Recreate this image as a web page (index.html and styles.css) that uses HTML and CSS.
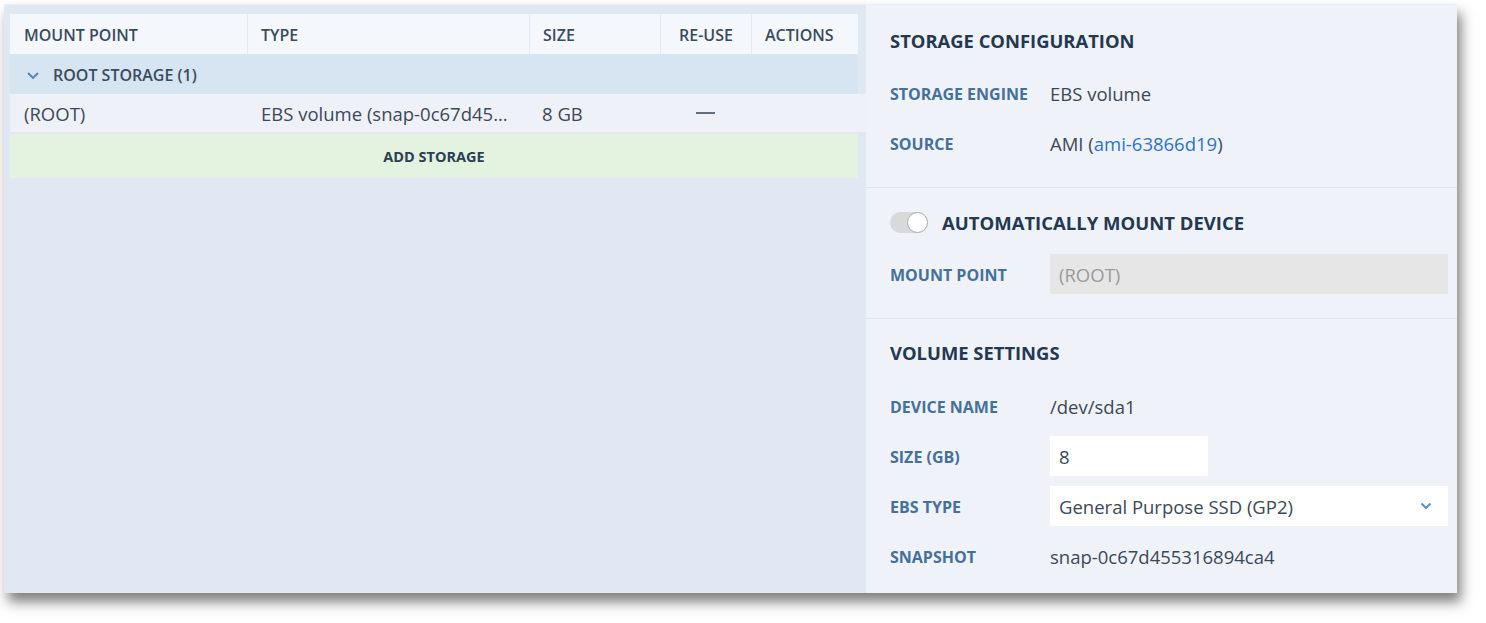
FILE: index.html
```html
<!DOCTYPE html>
<html>
<head>
<meta charset="utf-8">
<link rel="stylesheet" href="styles.css">
</head>
<body>
<div class="window">
  <div class="left">
    <div class="thead">
      <div class="th c1">MOUNT POINT</div>
      <div class="th c2">TYPE</div>
      <div class="th c3">SIZE</div>
      <div class="th c4">RE-USE</div>
      <div class="th c5">ACTIONS</div>
    </div>
    <div class="group">
      <svg class="chev" width="14" height="9" viewBox="0 0 14 9"><path d="M2 2 L7 7 L12 2" fill="none" stroke="#4f83b8" stroke-width="1.8"/></svg>
      <span>ROOT STORAGE (1)</span>
    </div>
    <div class="row">
      <div class="td c1">(ROOT)</div>
      <div class="td c2">EBS volume (snap-0c67d45...</div>
      <div class="td c3">8 GB</div>
      <div class="td c4 center"><span class="dash"></span></div>
      <div class="td c5"></div>
    </div>
    <div class="add">ADD STORAGE</div>
  </div>
  <div class="right">
    <section class="sec sec1">
      <h2 class="heading">STORAGE CONFIGURATION</h2>
      <div class="fields">
        <div class="label">STORAGE ENGINE</div><div class="value">EBS volume</div>
        <div class="label">SOURCE</div><div class="value">AMI (<a class="link">ami-63866d19</a>)</div>
      </div>
    </section>
    <section class="sec sec2">
      <div class="toggle-row">
        <span class="toggle"><span class="knob"></span></span>
        <span class="toggle-label">AUTOMATICALLY MOUNT DEVICE</span>
      </div>
      <div class="fields">
        <div class="label">MOUNT POINT</div><div class="input disabled">(ROOT)</div>
      </div>
    </section>
    <section class="sec sec3">
      <h2 class="heading">VOLUME SETTINGS</h2>
      <div class="fields">
        <div class="label">DEVICE NAME</div><div class="value">/dev/sda1</div>
        <div class="label">SIZE (GB)</div><div><div class="input small">8</div></div>
        <div class="label">EBS TYPE</div>
        <div class="input select">General Purpose SSD (GP2)
          <svg class="sel-chev" width="12" height="8" viewBox="0 0 12 8"><path d="M1.5 1.5 L6 6 L10.5 1.5" fill="none" stroke="#5f8fc4" stroke-width="2"/></svg>
        </div>
        <div class="label">SNAPSHOT</div><div class="value">snap-0c67d455316894ca4</div>
      </div>
    </section>
  </div>
</div>
</body>
</html>
```

FILE: styles.css
```css
* { box-sizing: border-box; }
html, body { margin: 0; background: #ffffff; }
body {
  padding: 4px 0 0 4px;
  min-height: 623px;
  font-family: "Open Sans", "Noto Sans", sans-serif;
  color: #3b4859;
}
.window {
  display: flex;
  width: 1453px;
  height: 589px;
  border-top: 1px solid #e9eff6;
  box-shadow: 4px 9px 12px rgba(0,0,0,0.5);
}
.left {
  width: 862px;
  background: #e0e9f3;
  padding: 9px 0 0 6px;
}
.thead {
  display: flex;
  height: 40px;
  background: #f4f7fb;
  margin-right: 8px;
}
.th {
  display: flex;
  align-items: center;
  padding-left: 13px;
  padding-top: 2px;
  font-size: 16px;
  font-weight: 600;
  color: #3a4b60;
  border-left: 1px solid #e2eaf4;
}
.th.c1 { border-left: none; padding-left: 14px; }
.c1 { width: 237px; }
.c2 { width: 282px; }
.c3 { width: 131px; }
.c4 { width: 91px; }
.c5 { width: 107px; }
.th.c4 { padding-left: 18px; }
.group {
  display: flex;
  align-items: center;
  height: 40px;
  background: #d7e4f1;
  margin-right: 8px;
  padding-left: 16px;
  padding-top: 1px;
  font-size: 16px;
  font-weight: 600;
  color: #3a4b60;
}
.chev { margin-right: 13px; margin-top: 1px; }
.row {
  display: flex;
  height: 38px;
  background: #eef2f8;
}
.td {
  display: flex;
  align-items: center;
  padding-left: 14px;
  font-size: 18.5px;
  color: #3b4859;
  white-space: nowrap;
}
.td.c3 { padding-left: 13px; }
.td.center { justify-content: center; padding-left: 0; }
.dash { display: block; width: 19px; height: 2px; background: #5f6f84; }
.add {
  margin-top: 2px;
  margin-right: 8px;
  height: 44px;
  background: #e4f3df;
  display: flex;
  align-items: center;
  justify-content: center;
  font-size: 14.5px;
  font-weight: 700;
  color: #2c3e55;
}
.right {
  flex: 1;
  background: #eff3f9;
  padding: 0 9px 0 24px;
}
.sec { border-bottom: 1px solid #dbe6f2; margin-left: -24px; margin-right: -9px; padding-left: 24px; padding-right: 9px; }
.sec:last-child { border-bottom: none; }
.sec1 { padding-top: 24px; padding-bottom: 24px; }
.sec2 { padding-top: 22px; padding-bottom: 24px; }
.sec3 { padding-top: 22px; }
.heading {
  margin: 0 0 20px 0;
  height: 24px;
  line-height: 24px;
  font-size: 18.4px;
  font-weight: 700;
  color: #233851;
}
.sec3 .heading { margin-bottom: 21px; }
.fields {
  display: grid;
  grid-template-columns: 160px 1fr;
  grid-auto-rows: 40px;
  row-gap: 10px;
  align-items: center;
}
.label {
  font-size: 16px;
  font-weight: 700;
  color: #44709b;
  padding-top: 1px;
}
.value { font-size: 18.5px; color: #3b4859; }
.link { color: #2d72cf; text-decoration: none; }
.toggle-row {
  display: flex;
  align-items: center;
  height: 24px;
  margin-bottom: 20px;
}
.toggle {
  position: relative;
  display: inline-block;
  width: 38px;
  height: 21px;
  border-radius: 11px;
  background: #d8d9db;
  margin-right: 14px;
}
.knob {
  position: absolute;
  right: 0;
  top: 0;
  width: 21px;
  height: 21px;
  border-radius: 50%;
  background: #ffffff;
  border: 1.5px solid #a9abae;
}
.toggle-label {
  font-size: 18.5px;
  font-weight: 700;
  color: #233851;
}
.input {
  height: 40px;
  display: flex;
  align-items: center;
  padding-left: 9px;
  font-size: 18.5px;
  background: #ffffff;
  color: #3b4859;
}
.input.disabled { background: #e6e6e6; color: #9a9a9a; }
.input.small { width: 158px; }
.input.select { justify-content: space-between; padding-right: 16px; }
```
